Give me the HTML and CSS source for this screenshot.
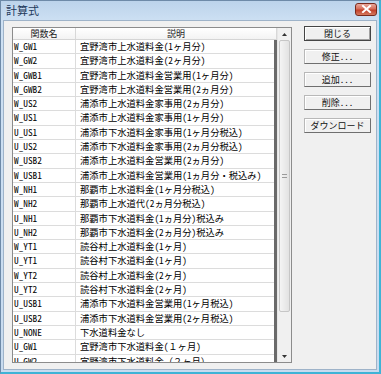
FILE: index.html
```html
<!DOCTYPE html>
<html lang="ja">
<head>
<meta charset="utf-8">
<link rel="stylesheet" href="styles.css">
</head>
<body>
<div class="window">
  <div class="titlebar">
    <span class="title">計算式</span>
    <span class="close"><svg width="11" height="8" viewBox="0 0 11 8"><path d="M2 1 L9 7 M9 1 L2 7" stroke="#fff" stroke-width="2" stroke-linecap="square"/></svg></span>
  </div>
  <div class="client">
    <div class="list">
      <div class="grid">
        <div class="head">
          <div class="hc c1">関数名</div>
          <div class="hc c2">説明</div>
        </div>
        <div class="body">
          <div class="row"><div class="c1">W_GW1</div><div class="c2">宜野湾市上水道料金(1ヶ月分)</div></div>
          <div class="row"><div class="c1">W_GW2</div><div class="c2">宜野湾市上水道料金(2ヶ月分)</div></div>
          <div class="row"><div class="c1">W_GWB1</div><div class="c2">宜野湾市上水道料金営業用(1ヶ月分)</div></div>
          <div class="row"><div class="c1">W_GWB2</div><div class="c2">宜野湾市上水道料金営業用(2ヵ月分)</div></div>
          <div class="row"><div class="c1">W_US2</div><div class="c2">浦添市上水道料金家事用(2ヵ月分)</div></div>
          <div class="row"><div class="c1">W_US1</div><div class="c2">浦添市上水道料金家事用(1ヶ月分)</div></div>
          <div class="row"><div class="c1">U_US1</div><div class="c2">浦添市下水道料金家事用(1ヶ月分税込)</div></div>
          <div class="row"><div class="c1">U_US2</div><div class="c2">浦添市下水道料金家事用(2ヵ月分税込)</div></div>
          <div class="row"><div class="c1">W_USB2</div><div class="c2">浦添市上水道料金営業用(2ヵ月分)</div></div>
          <div class="row"><div class="c1">W_USB1</div><div class="c2">浦添市上水道料金営業用(1ヵ月分・税込み)</div></div>
          <div class="row"><div class="c1">W_NH1</div><div class="c2">那覇市上水道料金(1ヶ月分税込)</div></div>
          <div class="row"><div class="c1">W_NH2</div><div class="c2">那覇市上水道代(2ヵ月分税込)</div></div>
          <div class="row"><div class="c1">U_NH1</div><div class="c2">那覇市下水道料金(1ヵ月分)税込み</div></div>
          <div class="row"><div class="c1">U_NH2</div><div class="c2">那覇市下水道料金(2ヵ月分)税込み</div></div>
          <div class="row"><div class="c1">W_YT1</div><div class="c2">読谷村上水道料金(1ヶ月)</div></div>
          <div class="row"><div class="c1">U_YT1</div><div class="c2">読谷村下水道料金(1ヶ月)</div></div>
          <div class="row"><div class="c1">W_YT2</div><div class="c2">読谷村上水道料金(2ヶ月)</div></div>
          <div class="row"><div class="c1">U_YT2</div><div class="c2">読谷村下水道料金(2ヶ月)</div></div>
          <div class="row"><div class="c1">U_USB1</div><div class="c2">浦添市下水道料金営業用(1ヶ月税込)</div></div>
          <div class="row"><div class="c1">U_USB2</div><div class="c2">浦添市下水道料金営業用(2ヶ月税込)</div></div>
          <div class="row"><div class="c1">U_NONE</div><div class="c2">下水道料金なし</div></div>
          <div class="row"><div class="c1">U_GW1</div><div class="c2">宜野湾市下水道料金(１ヶ月)</div></div>
          <div class="row"><div class="c1">U_GW2</div><div class="c2">宜野湾市下水道料金（２ヶ月）</div></div>
        </div>
      </div>
      <div class="vscroll">
        <div class="arrow up"><svg width="5" height="3" viewBox="0 0 5 3"><path d="M0 3 L2.5 0 L5 3Z" fill="#333"/></svg></div>
        <div class="track">
          <div class="thumb"><span class="grip"></span></div>
        </div>
        <div class="arrow down"><svg width="5" height="3" viewBox="0 0 5 3"><path d="M0 0 L2.5 3 L5 0Z" fill="#333"/></svg></div>
      </div>
    </div>
    <div class="buttons">
      <div class="btn default">閉じる</div>
      <div class="btn">修正...</div>
      <div class="btn">追加...</div>
      <div class="btn">削除...</div>
      <div class="btn">ダウンロード</div>
    </div>
  </div>
</div>
</body>
</html>
```

FILE: styles.css
```css
* { box-sizing: border-box; }
html, body { margin: 0; padding: 0; }
body {
  width: 381px;
  height: 374px;
  overflow: hidden;
  font-family: "Noto Sans Mono CJK JP", "Noto Sans CJK JP", sans-serif;
  color: #000;
}
.window {
  width: 381px;
  height: 374px;
  display: flex;
  flex-direction: column;
  background: linear-gradient(to bottom, #bcd3eb 0px, #cde0f3 20px, #c8dbef 100%);
  border: 1px solid #6e8aa8;
  border-bottom: 2px solid #3fb3d6;
  border-right: 2px solid #3fb3d6;
}
.titlebar {
  height: 19px;
  flex: none;
  display: flex;
  align-items: center;
  justify-content: space-between;
  padding: 0 2px 1px 5px;
}
.title {
  font-size: 11px;
  line-height: 12px;
  color: #1e395b;
}
.close {
  width: 22px;
  height: 13px;
  margin-top: -2px;
  border: 1px solid #7a2a1c;
  border-radius: 3px;
  background: linear-gradient(to bottom, #e9a99c 0%, #d66b57 45%, #c2402a 55%, #d47a5f 100%);
  display: flex;
  align-items: center;
  justify-content: center;
}
.close svg { display: block; }
.client {
  flex: 1;
  margin: 0 2px 2px 2px;
  background: #f0f0f0;
  border: 1px solid #9eb3c9;
  display: flex;
  align-items: flex-start;
  padding: 6px 0 0 8px;
}
.list {
  width: 280px;
  height: 336px;
  border: 1px solid #8c8c8c;
  background: #fff;
  display: flex;
  overflow: hidden;
}
.grid {
  width: 264px;
  display: flex;
  flex-direction: column;
}
.head {
  height: 12px;
  display: flex;
  flex: none;
  background: linear-gradient(to bottom, #ffffff, #f3f3f3);
  border-bottom: 1px solid #d5d5d5;
}
.hc {
  font-size: 9px;
  line-height: 11px;
  text-align: center;
  color: #222;
  border-right: 1px solid #d8d8d8;
}
.head .c1 { width: 63px; }
.head .c2 { flex: 1; }
.body {
  flex: 1;
  overflow: hidden;
  border-right: 3px solid #6a6a6a;
}
.row {
  height: 14.3px;
  display: flex;
  border-bottom: 1px solid #dcdcdc;
  font-size: 9.3px;
  line-height: 13px;
  white-space: nowrap;
}
.row .c1 {
  width: 63px;
  padding-left: 1px;
  border-right: 1px solid #dcdcdc;
  overflow: hidden;
}
.row .c2 {
  flex: 1;
  padding-left: 4px;
  overflow: hidden;
}
.vscroll {
  width: 14px;
  display: flex;
  flex-direction: column;
  background: #f0f0f0;
  border-left: 1px solid #e6e6e6;
}
.arrow {
  height: 12px;
  flex: none;
  display: flex;
  align-items: center;
  justify-content: center;
}
.arrow svg { display: block; }
.track {
  flex: 1;
  padding: 0 1px;
  display: flex;
  flex-direction: column;
}
.thumb {
  height: 272px;
  border: 1px solid #c6c6c6;
  border-radius: 2px;
  background: linear-gradient(to right, #f4f4f4, #e2e2e2);
  display: flex;
  align-items: center;
  justify-content: center;
}
.grip {
  width: 5px;
  height: 4px;
  border-top: 1px solid #9a9a9a;
  border-bottom: 1px solid #9a9a9a;
}
.track::after {
  content: "";
  flex: 1;
}
.buttons {
  margin-left: 12px;
  margin-top: -1px;
  width: 67px;
  display: flex;
  flex-direction: column;
  gap: 8px;
}
.btn {
  height: 15px;
  border: 1px solid #707070;
  border-color: #b8b8b8 #6f6f6f #6f6f6f #b8b8b8;
  background: #f0f0f0;
  box-shadow: inset 1px 1px 0 #fff;
  font-size: 9px;
  line-height: 13px;
  text-align: center;
  color: #111;
}
.btn.default {
  border-color: #444;
  box-shadow: inset 1px 1px 0 #fff, inset -1px -1px 0 #a0a0a0;
}
```
